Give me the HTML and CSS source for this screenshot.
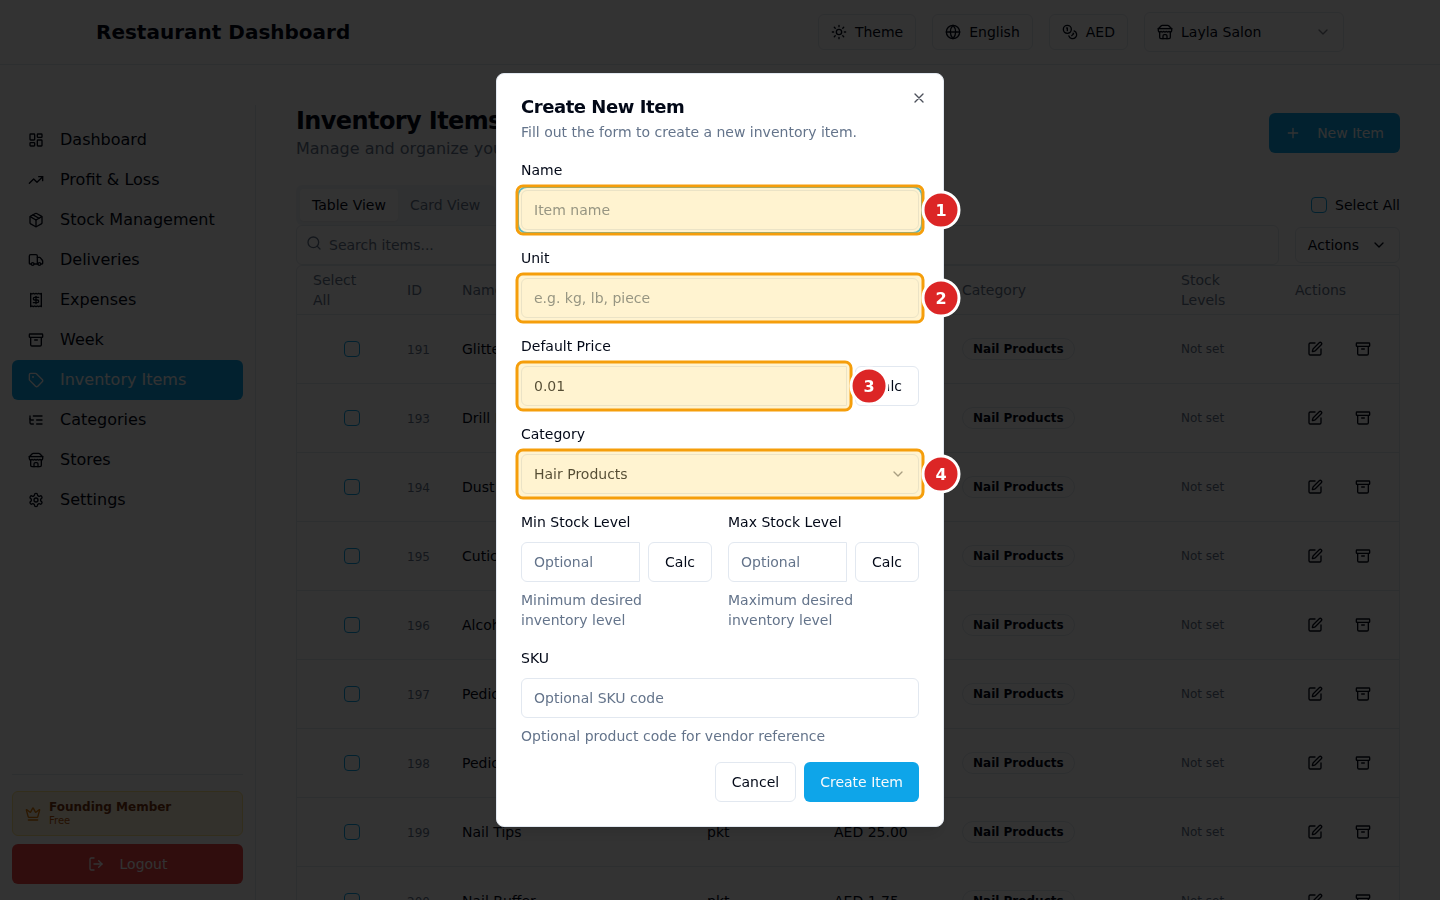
FILE: index.html
```html
<!DOCTYPE html>
<html lang="en">
<head>
    <meta charset="UTF-8">
    <meta name="viewport" content="width=device-width, initial-scale=1.0">
    <title>Restaurant Dashboard</title>
    <link rel="stylesheet" href="styles.css">
</head>
<body>
    <svg class="sprite" aria-hidden="true">
        <symbol id="i-dashboard" viewBox="0 0 24 24"><rect x="3" y="3" width="7" height="9" rx="1"/><rect x="14" y="3" width="7" height="5" rx="1"/><rect x="14" y="12" width="7" height="9" rx="1"/><rect x="3" y="16" width="7" height="5" rx="1"/></symbol>
        <symbol id="i-trend" viewBox="0 0 24 24"><path d="M22 7l-8.5 8.5-5-5L2 17"/><path d="M16 7h6v6"/></symbol>
        <symbol id="i-package" viewBox="0 0 24 24"><path d="M11 21.73a2 2 0 0 0 2 0l7-4A2 2 0 0 0 21 16V8a2 2 0 0 0-1-1.73l-7-4a2 2 0 0 0-2 0l-7 4A2 2 0 0 0 3 8v8a2 2 0 0 0 1 1.73z"/><path d="M12 22V12"/><path d="M3.3 7L12 12l8.7-5"/><path d="M7.5 4.27l9 5.15"/></symbol>
        <symbol id="i-truck" viewBox="0 0 24 24"><path d="M14 18V6a2 2 0 0 0-2-2H4a2 2 0 0 0-2 2v11a1 1 0 0 0 1 1h2"/><path d="M15 18H9"/><path d="M19 18h2a1 1 0 0 0 1-1v-3.65a1 1 0 0 0-.22-.62l-3.48-4.35A1 1 0 0 0 17.52 8H14"/><circle cx="17" cy="18" r="2"/><circle cx="7" cy="18" r="2"/></symbol>
        <symbol id="i-receipt" viewBox="0 0 24 24"><path d="M4 2v20l2-1 2 1 2-1 2 1 2-1 2 1 2-1 2 1V2l-2 1-2-1-2 1-2-1-2 1-2-1-2 1Z"/><path d="M16 8h-6a2 2 0 1 0 0 4h4a2 2 0 1 1 0 4H8"/><path d="M12 17.5v-11"/></symbol>
        <symbol id="i-archive" viewBox="0 0 24 24"><rect x="2" y="3" width="20" height="5" rx="1"/><path d="M4 8v11a2 2 0 0 0 2 2h12a2 2 0 0 0 2-2V8"/><path d="M10 12h4"/></symbol>
        <symbol id="i-tag" viewBox="0 0 24 24"><path d="M12.59 2.59A2 2 0 0 0 11.17 2H4a2 2 0 0 0-2 2v7.17a2 2 0 0 0 .59 1.42l8.7 8.7a2.43 2.43 0 0 0 3.42 0l6.58-6.58a2.43 2.43 0 0 0 0-3.42z"/><circle cx="7.5" cy="7.5" r=".5" fill="currentColor"/></symbol>
        <symbol id="i-tree" viewBox="0 0 24 24"><path d="M21 12h-8"/><path d="M21 6H8"/><path d="M21 18h-8"/><path d="M3 6v4c0 1.1.9 2 2 2h3"/><path d="M3 10v6c0 1.1.9 2 2 2h3"/></symbol>
        <symbol id="i-store" viewBox="0 0 24 24"><path d="M2 7l4.41-4.41A2 2 0 0 1 7.83 2h8.34a2 2 0 0 1 1.42.59L22 7"/><path d="M4 12v8a2 2 0 0 0 2 2h12a2 2 0 0 0 2-2v-8"/><path d="M15 22v-4a2 2 0 0 0-2-2h-2a2 2 0 0 0-2 2v4"/><path d="M2 7h20"/><path d="M22 7v3a2 2 0 0 1-2 2a2.7 2.7 0 0 1-1.59-.63.7.7 0 0 0-.82 0A2.7 2.7 0 0 1 16 12a2.7 2.7 0 0 1-1.59-.63.7.7 0 0 0-.82 0A2.7 2.7 0 0 1 12 12a2.7 2.7 0 0 1-1.59-.63.7.7 0 0 0-.82 0A2.7 2.7 0 0 1 8 12a2.7 2.7 0 0 1-1.59-.63.7.7 0 0 0-.82 0A2.7 2.7 0 0 1 4 12a2 2 0 0 1-2-2V7"/></symbol>
        <symbol id="i-settings" viewBox="0 0 24 24"><path d="M12.22 2h-.44a2 2 0 0 0-2 2v.18a2 2 0 0 1-1 1.73l-.43.25a2 2 0 0 1-2 0l-.15-.08a2 2 0 0 0-2.73.73l-.22.38a2 2 0 0 0 .73 2.73l.15.1a2 2 0 0 1 1 1.72v.51a2 2 0 0 1-1 1.74l-.15.09a2 2 0 0 0-.73 2.73l.22.38a2 2 0 0 0 2.73.73l.15-.08a2 2 0 0 1 2 0l.43.25a2 2 0 0 1 1 1.73V20a2 2 0 0 0 2 2h.44a2 2 0 0 0 2-2v-.18a2 2 0 0 1 1-1.73l.43-.25a2 2 0 0 1 2 0l.15.08a2 2 0 0 0 2.73-.73l.22-.39a2 2 0 0 0-.73-2.73l-.15-.08a2 2 0 0 1-1-1.74v-.5a2 2 0 0 1 1-1.74l.15-.09a2 2 0 0 0 .73-2.73l-.22-.38a2 2 0 0 0-2.73-.73l-.15.08a2 2 0 0 1-2 0l-.43-.25a2 2 0 0 1-1-1.73V4a2 2 0 0 0-2-2z"/><circle cx="12" cy="12" r="3"/></symbol>
        <symbol id="i-crown" viewBox="0 0 24 24"><path d="M11.56 3.27a.5.5 0 0 1 .88 0L15.39 8.87a1 1 0 0 0 1.52.29L21.18 5.5a.5.5 0 0 1 .8.52l-2.83 10.25a1 1 0 0 1-.96.73H5.81a1 1 0 0 1-.96-.73L2.02 6.02a.5.5 0 0 1 .8-.52l4.28 3.66a1 1 0 0 0 1.52-.29z"/><path d="M5 21h14"/></symbol>
        <symbol id="i-logout" viewBox="0 0 24 24"><path d="M9 21H5a2 2 0 0 1-2-2V5a2 2 0 0 1 2-2h4"/><path d="M16 17l5-5-5-5"/><path d="M21 12H9"/></symbol>
        <symbol id="i-sun" viewBox="0 0 24 24"><circle cx="12" cy="12" r="4"/><path d="M12 2v2M12 20v2M4.93 4.93l1.41 1.41M17.66 17.66l1.41 1.41M2 12h2M20 12h2M6.34 17.66l-1.41 1.41M19.07 4.93l-1.41 1.41"/></symbol>
        <symbol id="i-globe" viewBox="0 0 24 24"><circle cx="12" cy="12" r="10"/><path d="M12 2a14.5 14.5 0 0 0 0 20 14.5 14.5 0 0 0 0-20"/><path d="M2 12h20"/></symbol>
        <symbol id="i-coins" viewBox="0 0 24 24"><circle cx="8" cy="8" r="6"/><path d="M18.09 10.37A6 6 0 1 1 10.34 18"/><path d="M7 6h1v4"/><path d="M16.71 13.88l.7.71-2.82 2.82"/></symbol>
        <symbol id="i-chevron" viewBox="0 0 24 24"><path d="M6 9l6 6 6-6"/></symbol>
        <symbol id="i-plus" viewBox="0 0 24 24"><path d="M5 12h14M12 5v14"/></symbol>
        <symbol id="i-search" viewBox="0 0 24 24"><circle cx="11" cy="11" r="8"/><path d="M21 21l-4.3-4.3"/></symbol>
        <symbol id="i-edit" viewBox="0 0 24 24"><path d="M12 3H5a2 2 0 0 0-2 2v14a2 2 0 0 0 2 2h14a2 2 0 0 0 2-2v-7"/><path d="M18.38 2.63a1 1 0 0 1 3 3l-9.01 9.01a2 2 0 0 1-.85.51l-2.87.84a.5.5 0 0 1-.62-.62l.84-2.87a2 2 0 0 1 .51-.85z"/></symbol>
        <symbol id="i-x" viewBox="0 0 24 24"><path d="M18 6L6 18M6 6l12 12"/></symbol>
    </svg>

    <header class="header">
        <div class="header-inner">
            <div class="brand">Restaurant Dashboard</div>
            <div class="header-actions">
                <button class="btn btn-outline btn-sm"><svg class="icon"><use href="#i-sun"/></svg>Theme</button>
                <button class="btn btn-outline btn-sm"><svg class="icon"><use href="#i-globe"/></svg>English</button>
                <button class="btn btn-outline btn-sm"><svg class="icon"><use href="#i-coins"/></svg>AED</button>
                <div class="select-wrap store-select">
                    <svg class="icon select-icon"><use href="#i-store"/></svg>
                    <select class="input" aria-label="Store"><option>Layla Salon</option></select>
                    <svg class="icon select-chevron"><use href="#i-chevron"/></svg>
                </div>
            </div>
        </div>
    </header>

    <div class="layout">
        <aside class="sidebar">
            <nav class="nav">
                <a class="nav-link" href="#"><svg class="icon"><use href="#i-dashboard"/></svg>Dashboard</a>
                <a class="nav-link" href="#"><svg class="icon"><use href="#i-trend"/></svg>Profit &amp; Loss</a>
                <a class="nav-link" href="#"><svg class="icon"><use href="#i-package"/></svg>Stock Management</a>
                <a class="nav-link" href="#"><svg class="icon"><use href="#i-truck"/></svg>Deliveries</a>
                <a class="nav-link" href="#"><svg class="icon"><use href="#i-receipt"/></svg>Expenses</a>
                <a class="nav-link" href="#"><svg class="icon"><use href="#i-archive"/></svg>Week</a>
                <a class="nav-link active" href="#"><svg class="icon"><use href="#i-tag"/></svg>Inventory Items</a>
                <a class="nav-link" href="#"><svg class="icon"><use href="#i-tree"/></svg>Categories</a>
                <a class="nav-link" href="#"><svg class="icon"><use href="#i-store"/></svg>Stores</a>
                <a class="nav-link" href="#"><svg class="icon"><use href="#i-settings"/></svg>Settings</a>
            </nav>
            <div class="sidebar-footer">
                <div class="plan">
                    <svg class="icon"><use href="#i-crown"/></svg>
                    <div>
                        <div class="plan-name">Founding Member</div>
                        <div class="plan-tier">Free</div>
                    </div>
                </div>
                <button class="btn btn-danger"><svg class="icon"><use href="#i-logout"/></svg>Logout</button>
            </div>
        </aside>

        <main class="main">
            <div class="page-head">
                <div>
                    <h1>Inventory Items</h1>
                    <p>Manage and organize your inventory items</p>
                </div>
                <button class="btn btn-primary btn-new"><svg class="icon"><use href="#i-plus"/></svg>New Item</button>
            </div>

            <div class="view-bar">
                <div class="tabs">
                    <button class="tab active">Table View</button>
                    <button class="tab">Card View</button>
                </div>
                <label class="check-label"><input type="checkbox" class="checkbox">Select All</label>
            </div>

            <div class="filter-bar">
                <div class="search">
                    <svg class="icon"><use href="#i-search"/></svg>
                    <input type="text" class="input" placeholder="Search items..." aria-label="Search items">
                </div>
                <button class="btn btn-outline btn-sm btn-menu">Actions<svg class="icon"><use href="#i-chevron"/></svg></button>
            </div>

            <div class="table-wrap">
                <table class="items">
                    <colgroup>
                        <col class="col-check"><col class="col-id"><col class="col-name"><col class="col-unit">
                        <col class="col-price"><col class="col-category"><col class="col-stock"><col class="col-actions">
                    </colgroup>
                    <thead>
                        <tr>
                            <th>Select All</th>
                            <th>ID</th>
                            <th>Name</th>
                            <th>Unit</th>
                            <th>Default Price</th>
                            <th>Category</th>
                            <th>Stock Levels</th>
                            <th>Actions</th>
                        </tr>
                    </thead>
                    <tbody id="rows"></tbody>
                </table>
            </div>
        </main>
    </div>

    <div class="overlay">
        <div class="modal" role="dialog" aria-modal="true" aria-labelledby="modalTitle">
            <button class="close" aria-label="Close"><svg class="icon"><use href="#i-x"/></svg></button>
            <div class="modal-head">
                <h2 id="modalTitle">Create New Item</h2>
                <p>Fill out the form to create a new inventory item.</p>
            </div>
            <form class="form">
                <div class="field">
                    <label for="name">Name</label>
                    <div class="marked">
                        <input id="name" type="text" class="input focused" placeholder="Item name">
                        <svg class="marker"><rect width="100%" height="100%" rx="6"/><svg x="100%" y="50%"><circle cx="18" r="18"/><text x="18" y="6">1</text></svg></svg>
                    </div>
                </div>
                <div class="field">
                    <label for="unit">Unit</label>
                    <div class="marked">
                        <input id="unit" type="text" class="input" placeholder="e.g. kg, lb, piece">
                        <svg class="marker"><rect width="100%" height="100%" rx="6"/><svg x="100%" y="50%"><circle cx="18" r="18"/><text x="18" y="6">2</text></svg></svg>
                    </div>
                </div>
                <div class="field">
                    <label for="price">Default Price</label>
                    <div class="calc-row">
                        <div class="marked">
                            <input id="price" type="text" class="input" value="0.01">
                            <svg class="marker"><rect width="100%" height="100%" rx="6"/><svg x="100%" y="50%"><circle cx="18" r="18"/><text x="18" y="6">3</text></svg></svg>
                        </div>
                        <button type="button" class="btn btn-outline">Calc</button>
                    </div>
                </div>
                <div class="field">
                    <label for="category">Category</label>
                    <div class="marked select-wrap">
                        <select id="category" class="input"><option>Hair Products</option></select>
                        <svg class="icon select-chevron"><use href="#i-chevron"/></svg>
                        <svg class="marker"><rect width="100%" height="100%" rx="6"/><svg x="100%" y="50%"><circle cx="18" r="18"/><text x="18" y="6">4</text></svg></svg>
                    </div>
                </div>
                <div class="field-pair">
                    <div class="field">
                        <label for="min">Min Stock Level</label>
                        <div class="calc-row">
                            <input id="min" type="text" class="input" placeholder="Optional">
                            <button type="button" class="btn btn-outline">Calc</button>
                        </div>
                        <p class="hint">Minimum desired inventory level</p>
                    </div>
                    <div class="field">
                        <label for="max">Max Stock Level</label>
                        <div class="calc-row">
                            <input id="max" type="text" class="input" placeholder="Optional">
                            <button type="button" class="btn btn-outline">Calc</button>
                        </div>
                        <p class="hint">Maximum desired inventory level</p>
                    </div>
                </div>
                <div class="field">
                    <label for="sku">SKU</label>
                    <input id="sku" type="text" class="input" placeholder="Optional SKU code">
                    <p class="hint">Optional product code for vendor reference</p>
                </div>
                <div class="modal-foot">
                    <button type="button" class="btn btn-outline">Cancel</button>
                    <button type="submit" class="btn btn-primary">Create Item</button>
                </div>
            </form>
        </div>
    </div>

    <script>
        const items = [
            [191, 'Glitter', 'pcs', 'AED 5.00'],
            [193, 'Drill Bits', 'pcs', 'AED 15.00'],
            [194, 'Dust Brush', 'pcs', 'AED 5.00'],
            [195, 'Cuticle Oil', 'pcs', 'AED 10.00'],
            [196, 'Alcohol', 'pcs', 'AED 10.00'],
            [197, 'Pedicure Kit', 'pkt', 'AED 5.00'],
            [198, 'Pedicure File', 'pkt', 'AED 5.00'],
            [199, 'Nail Tips', 'pkt', 'AED 25.00'],
            [200, 'Nail Buffer', 'pkt', 'AED 1.75']
        ];

        document.getElementById('rows').innerHTML = items.map(([id, name, unit, price]) => `
            <tr>
                <td class="cell-check"><input type="checkbox" class="checkbox" aria-label="Select ${name}"></td>
                <td><span class="item-id">${id}</span></td>
                <td>${name}</td>
                <td>${unit}</td>
                <td>${price}</td>
                <td><span class="badge">Nail Products</span></td>
                <td><div class="not-set">Not set</div></td>
                <td>
                    <div class="row-actions">
                        <button aria-label="Edit"><svg class="icon"><use href="#i-edit"/></svg></button>
                        <button aria-label="Archive"><svg class="icon"><use href="#i-archive"/></svg></button>
                    </div>
                </td>
            </tr>`).join('');
    </script>
</body>
</html>
```
FILE: styles.css
```css
:root {
    --primary: #0ea5e9;
    --text: #020817;
    --muted: #64748b;
    --border: #e2e8f0;
    --soft: #f1f5f9;
    --danger: #ef4444;
    --marker: #f59e0b;
}

* {
    margin: 0;
    padding: 0;
    box-sizing: border-box;
}

body {
    height: 100vh;
    overflow: hidden;
    background: #fff;
    color: var(--text);
    font-family: "DejaVu Sans", sans-serif;
    font-size: 16px;
    line-height: 24px;
}

button, input, select {
    font: inherit;
    color: inherit;
}

.sprite {
    display: none;
}

.icon {
    width: 16px;
    height: 16px;
    flex-shrink: 0;
    fill: none;
    stroke: currentColor;
    stroke-width: 2;
    stroke-linecap: round;
    stroke-linejoin: round;
}

/* Buttons and inputs */
.btn {
    display: inline-flex;
    align-items: center;
    justify-content: center;
    gap: 8px;
    height: 40px;
    padding: 0 16px;
    border: none;
    border-radius: 6px;
    font-size: 14px;
    line-height: 20px;
    white-space: nowrap;
    cursor: pointer;
}

.btn-outline {
    background: #fff;
    border: 1px solid var(--border);
}

.btn-sm {
    height: 36px;
    padding: 0 12px;
}

.btn-primary {
    background: var(--primary);
    color: #f8fafc;
}

.btn-danger {
    background: var(--danger);
    color: #f8fafc;
    gap: 16px;
}

.btn-new {
    gap: 16px;
}

.btn-menu {
    gap: 12px;
}

.input {
    display: block;
    width: 100%;
    min-width: 0;
    height: 40px;
    padding: 8px 12px;
    border: 1px solid var(--border);
    border-radius: 6px;
    background: #fff;
    font-size: 14px;
    line-height: 20px;
    outline: none;
    appearance: none;
}

.input::placeholder {
    color: var(--muted);
    opacity: 1;
}

.input.focused {
    box-shadow: 0 0 0 2px #fff, 0 0 0 4px var(--primary);
}

.checkbox {
    width: 16px;
    height: 16px;
    border: 1px solid var(--primary);
    border-radius: 4px;
    appearance: none;
}

.select-wrap {
    position: relative;
}

.select-chevron {
    position: absolute;
    top: 12px;
    right: 13px;
    opacity: 0.5;
    pointer-events: none;
}

.select-icon {
    position: absolute;
    top: 12px;
    left: 13px;
}

/* Header */
.header {
    border-bottom: 1px solid var(--border);
}

.header-inner {
    display: flex;
    align-items: center;
    justify-content: space-between;
    max-width: 1280px;
    height: 64px;
    margin: 0 auto;
    padding: 0 16px;
}

.brand {
    font-size: 20px;
    font-weight: bold;
}

.header-actions {
    display: flex;
    align-items: center;
    gap: 16px;
}

.store-select {
    width: 200px;
}

.store-select .input {
    padding-left: 36px;
}

/* Layout */
.layout {
    display: flex;
    height: calc(100vh - 65px);
    padding-top: 40px;
}

.sidebar {
    display: flex;
    flex-direction: column;
    justify-content: space-between;
    flex: 0 0 256px;
    padding: 15px 12px 16px;
    border-right: 1px solid var(--border);
}

.nav-link {
    display: flex;
    align-items: center;
    gap: 16px;
    height: 40px;
    padding: 0 16px;
    border-radius: 6px;
    color: var(--text);
    text-decoration: none;
}

.nav-link.active {
    background: var(--primary);
    color: #f8fafc;
}

.sidebar-footer {
    display: flex;
    flex-direction: column;
    gap: 8px;
    padding-top: 16px;
    border-top: 1px solid var(--border);
}

.plan {
    display: flex;
    align-items: center;
    gap: 8px;
    padding: 8px 12px;
    border: 1px solid #fde68a;
    border-radius: 6px;
    background: #fff5dc;
    color: #d97706;
}

.plan-name {
    font-size: 12px;
    line-height: 15px;
    font-weight: bold;
    color: #78350f;
}

.plan-tier {
    font-size: 10px;
    line-height: 12px;
    color: #b45309;
}

.main {
    flex: 1;
    min-width: 0;
    padding: 0 40px;
}

.page-head {
    display: flex;
    align-items: center;
    justify-content: space-between;
    margin-bottom: 24px;
}

.page-head h1 {
    font-size: 24px;
    line-height: 32px;
    letter-spacing: -0.025em;
}

.page-head p {
    color: var(--muted);
}

.view-bar, .filter-bar {
    display: flex;
    align-items: center;
    justify-content: space-between;
    gap: 16px;
}

.tabs {
    display: flex;
    height: 40px;
    padding: 4px;
    border-radius: 6px;
    background: var(--soft);
}

.tab {
    padding: 0 12px;
    border: none;
    border-radius: 4px;
    background: none;
    color: var(--muted);
    font-size: 14px;
}

.tab.active {
    background: #fff;
    color: var(--text);
    box-shadow: 0 1px 2px rgba(0,0,0,0.05);
}

.check-label {
    display: flex;
    align-items: center;
    gap: 8px;
    font-size: 14px;
}

.search {
    position: relative;
    flex: 1;
}

.search .icon {
    position: absolute;
    top: 10px;
    left: 10px;
    color: var(--muted);
}

.search .input {
    padding-left: 32px;
}

/* Items table */
.table-wrap {
    border: 1px solid var(--border);
    border-radius: 6px;
}

.items {
    width: 100%;
    table-layout: fixed;
    border-collapse: separate;
    border-spacing: 0;
    font-size: 14px;
    line-height: 20px;
}

.col-check { width: 94px; }
.col-id { width: 55px; }
.col-name { width: 245px; }
.col-unit { width: 127px; }
.col-price { width: 128px; }
.col-category { width: 219px; }
.col-stock { width: 114px; }
.col-actions { width: 120px; }

.items th {
    height: 49px;
    padding: 0 16px;
    border-bottom: 1px solid var(--border);
    color: var(--muted);
    font-weight: normal;
    text-align: left;
}

.items td {
    padding: 16px;
    border-bottom: 1px solid var(--border);
    vertical-align: middle;
}

.items .cell-check {
    padding-right: 0;
    text-align: center;
}

.cell-check .checkbox {
    display: block;
    margin: 0 auto;
}

.item-id {
    font-size: 12px;
    color: var(--muted);
}

.not-set {
    font-size: 12px;
    line-height: 16px;
    color: var(--muted);
}

.badge {
    display: inline-block;
    padding: 2px 10px;
    border: 1px solid var(--border);
    border-radius: 11px;
    font-size: 12px;
    line-height: 16px;
    font-weight: bold;
    white-space: nowrap;
}

.row-actions {
    display: flex;
    gap: 8px;
}

.row-actions button {
    display: flex;
    align-items: center;
    justify-content: center;
    width: 40px;
    height: 36px;
    border: none;
    background: none;
}

/* Modal */
.overlay {
    position: fixed;
    inset: 0;
    display: flex;
    align-items: center;
    justify-content: center;
    background: rgba(0,0,0,0.8);
}

.modal {
    position: relative;
    width: 100%;
    max-width: 448px;
    padding: 24px;
    border: 1px solid var(--border);
    border-radius: 8px;
    background: #fff;
    box-shadow: 0 10px 15px -3px rgba(0,0,0,0.1), 0 4px 6px -4px rgba(0,0,0,0.1);
    font-size: 14px;
}

.close {
    position: absolute;
    top: 16px;
    right: 16px;
    display: flex;
    border: none;
    background: none;
    opacity: 0.7;
}

.modal-head {
    margin-bottom: 16px;
}

.modal-head h2 {
    margin-bottom: 6px;
    font-size: 18px;
    line-height: 18px;
    letter-spacing: -0.025em;
}

.modal-head p, .hint {
    color: var(--muted);
    line-height: 20px;
}

.form {
    display: flex;
    flex-direction: column;
    gap: 16px;
}

.field {
    display: flex;
    flex-direction: column;
    gap: 8px;
}

.field-pair {
    display: grid;
    grid-template-columns: 1fr 1fr;
    gap: 16px;
}

.calc-row {
    display: flex;
    gap: 8px;
}

.calc-row .input {
    border-top-right-radius: 0;
    border-bottom-right-radius: 0;
}

.calc-row .marked {
    flex: 1;
}

.modal-foot {
    display: flex;
    justify-content: flex-end;
    gap: 8px;
}

/* Numbered callouts over the required fields */
.marked {
    position: relative;
}

.marker {
    position: absolute;
    top: -4px;
    left: -4px;
    z-index: 1;
    width: calc(100% + 8px);
    height: calc(100% + 8px);
    overflow: visible;
    pointer-events: none;
}

.marker svg {
    overflow: visible;
}

.marker rect {
    fill: rgba(254,218,112,0.33);
    stroke: var(--marker);
    stroke-width: 3;
}

.marker circle {
    fill: #dc2626;
    stroke: #fff;
    stroke-width: 3;
}

.marker text {
    fill: #fff;
    font-size: 16px;
    font-weight: bold;
    text-anchor: middle;
}
```
